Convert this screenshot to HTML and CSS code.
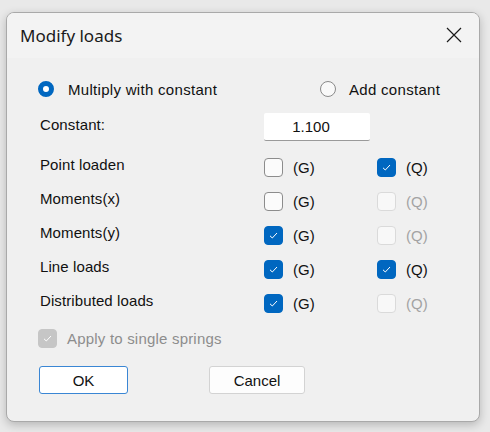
FILE: index.html
```html
<!DOCTYPE html>
<html>
<head>
<meta charset="utf-8">
<link rel="stylesheet" href="styles.css">
</head>
<body>
<div class="window">
  <div class="titlebar">
    <span class="title">Modify loads</span>
    <svg class="close" width="16" height="16" viewBox="0 0 16 16"><path d="M1 1 L15 15 M15 1 L1 15" stroke="#1a1a1a" stroke-width="1.2" fill="none"/></svg>
  </div>
  <div class="content">
    <div class="radio-row">
      <div class="radio-item first">
        <span class="radio checked"></span>
        <span class="text">Multiply with constant</span>
      </div>
      <div class="radio-item">
        <span class="radio"></span>
        <span class="text">Add constant</span>
      </div>
    </div>
    <div class="const-row">
      <span class="label">Constant:</span>
      <div class="input">1.100</div>
    </div>
    <div class="rows">
      <div class="row">
        <span class="label">Point loaden</span>
        <div class="cb-item"><span class="cb"></span><span class="cb-text">(G)</span></div>
        <div class="cb-item"><span class="cb checked"><svg viewBox="0 0 19 19"><path d="M6 9.8 L8.3 12 L13 7" stroke="#fff" stroke-width="1" fill="none"/></svg></span><span class="cb-text">(Q)</span></div>
      </div>
      <div class="row">
        <span class="label">Moments(x)</span>
        <div class="cb-item"><span class="cb"></span><span class="cb-text">(G)</span></div>
        <div class="cb-item disabled"><span class="cb"></span><span class="cb-text">(Q)</span></div>
      </div>
      <div class="row">
        <span class="label">Moments(y)</span>
        <div class="cb-item"><span class="cb checked"><svg viewBox="0 0 19 19"><path d="M6 9.8 L8.3 12 L13 7" stroke="#fff" stroke-width="1" fill="none"/></svg></span><span class="cb-text">(G)</span></div>
        <div class="cb-item disabled"><span class="cb"></span><span class="cb-text">(Q)</span></div>
      </div>
      <div class="row">
        <span class="label">Line loads</span>
        <div class="cb-item"><span class="cb checked"><svg viewBox="0 0 19 19"><path d="M6 9.8 L8.3 12 L13 7" stroke="#fff" stroke-width="1" fill="none"/></svg></span><span class="cb-text">(G)</span></div>
        <div class="cb-item"><span class="cb checked"><svg viewBox="0 0 19 19"><path d="M6 9.8 L8.3 12 L13 7" stroke="#fff" stroke-width="1" fill="none"/></svg></span><span class="cb-text">(Q)</span></div>
      </div>
      <div class="row">
        <span class="label">Distributed loads</span>
        <div class="cb-item"><span class="cb checked"><svg viewBox="0 0 19 19"><path d="M6 9.8 L8.3 12 L13 7" stroke="#fff" stroke-width="1" fill="none"/></svg></span><span class="cb-text">(G)</span></div>
        <div class="cb-item disabled"><span class="cb"></span><span class="cb-text">(Q)</span></div>
      </div>
    </div>
    <div class="apply-row">
      <div class="cb-item apply"><span class="cb checked grey"><svg viewBox="0 0 19 19"><path d="M6 9.8 L8.3 12 L13 7" stroke="#fff" stroke-width="1" fill="none"/></svg></span><span class="cb-text">Apply to single springs</span></div>
    </div>
    <div class="buttons">
      <div class="btn default">OK</div>
      <div class="btn">Cancel</div>
    </div>
  </div>
</div>
</body>
</html>
```

FILE: styles.css
```css
html, body {
  margin: 0;
  padding: 0;
}
body {
  background: #e9e9e9;
  width: 490px;
  height: 432px;
  padding: 12px 0 0 6px;
  box-sizing: border-box;
  font-family: "Liberation Sans", Arial, sans-serif;
  font-size: 15px;
  color: #111;
  overflow: hidden;
}
.window {
  width: 474px;
  height: 410px;
  box-sizing: border-box;
  border: 1px solid #a9a9a9;
  border-radius: 8px;
  background: #f0f0f0;
  box-shadow: 0 3px 10px rgba(0,0,0,0.22);
  overflow: hidden;
}
.titlebar {
  height: 45px;
  background: #f3f3f3;
  display: flex;
  align-items: center;
  justify-content: space-between;
  padding: 0 17px 0 13px;
}
.title {
  font-family: "Noto Sans", "Open Sans", sans-serif;
  font-size: 17px;
  color: #1a1a1a;
  margin-top: -1px;
}
.close {
  display: block;
  margin-top: -1px;
}
.content {
  padding: 18px 0 0 31px;
}
.radio-row {
  display: flex;
  align-items: center;
  height: 26px;
}
.radio-item {
  display: flex;
  align-items: center;
  flex: none;
}
.radio-item.first {
  width: 282px;
}
.text {
  letter-spacing: 0.3px;
}
.radio {
  width: 16px;
  height: 16px;
  box-sizing: border-box;
  border-radius: 50%;
  border: 1px solid #8a8a8a;
  background: #f9f9f9;
  margin-right: 13px;
  flex: none;
}
.radio.checked {
  border: 5px solid #0067c0;
  background: #fff;
}
.radio.checked + .text {
  margin-left: 1px;
}
.const-row {
  display: flex;
  align-items: center;
  height: 32px;
  margin-top: 9px;
}
.label {
  flex: none;
  width: 226px;
  padding-left: 2px;
  box-sizing: border-box;
  padding-bottom: 6px;
  letter-spacing: 0.1px;
}
.input {
  flex: none;
  width: 106px;
  height: 28px;
  box-sizing: border-box;
  background: #fff;
  border-bottom: 1px solid #9a9a9a;
  border-radius: 2px;
  display: flex;
  align-items: center;
  justify-content: center;
  padding-right: 12px;
}
.rows {
  margin-top: 7px;
}
.row {
  display: flex;
  align-items: center;
  height: 34px;
}
.cb-item {
  display: flex;
  align-items: center;
  width: 113px;
  flex: none;
}
.cb {
  width: 19px;
  height: 19px;
  box-sizing: border-box;
  border: 1px solid #8c8c8c;
  border-radius: 4px;
  background: #fbfbfb;
  margin-right: 10px;
  flex: none;
}
.cb svg {
  display: block;
  width: 19px;
  height: 19px;
  margin: -1px;
}
.cb.checked {
  background: #0067c0;
  border-color: #0067c0;
}
.cb.checked.grey {
  background: #c6c6c6;
  border-color: #c6c6c6;
}
.cb-item.disabled .cb {
  border-color: #dadada;
  background: #f8f8f8;
}
.cb-item.disabled .cb-text {
  color: #a3a3a3;
}
.apply-row {
  height: 36px;
  display: flex;
  align-items: center;
}
.cb-item.apply {
  width: auto;
}
.apply .cb-text {
  color: #8d8d8d;
  letter-spacing: 0.2px;
}
.buttons {
  display: flex;
  margin-top: 10px;
  padding-left: 1px;
}
.btn {
  flex: none;
  width: 89px;
  height: 28px;
  box-sizing: border-box;
  background: #fdfdfd;
  border: 1px solid #d3d3d3;
  border-radius: 3px;
  display: flex;
  align-items: center;
  justify-content: center;
  margin-right: 81px;
}
.btn.default {
  border-color: #3a86d4;
  background: #fff;
}
.btn:last-child {
  width: 96px;
}
```
